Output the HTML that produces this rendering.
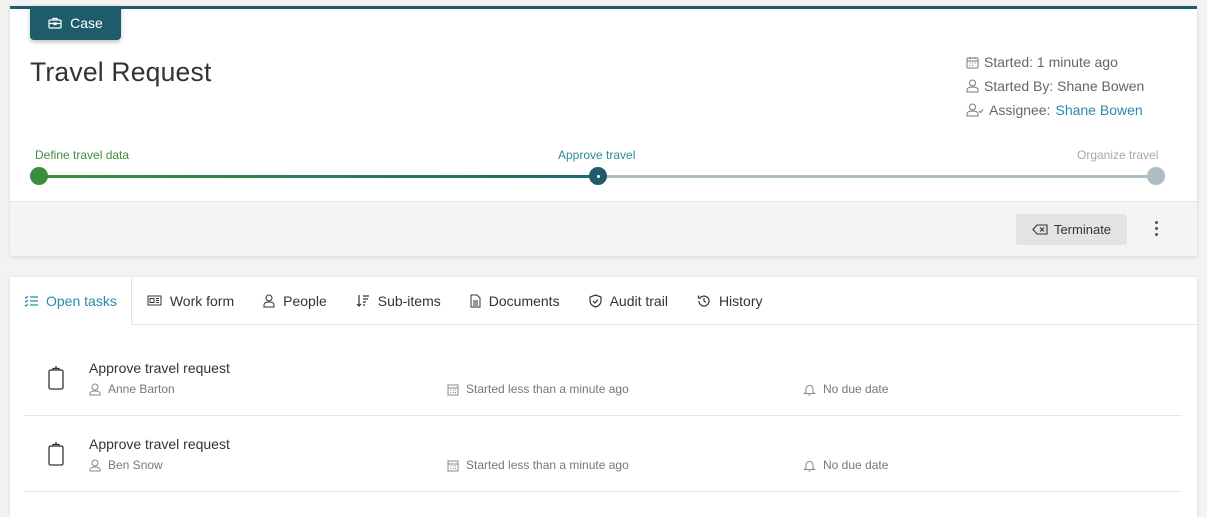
<!DOCTYPE html>
<html><head><style>
*{box-sizing:border-box;margin:0;padding:0}
body{width:1207px;height:502px;background:#f3f3f2;font-family:"Liberation Sans",sans-serif;position:relative;overflow:hidden;color:#333}
.card1{position:absolute;left:10px;top:6px;width:1187px;height:250px;background:#fff;border-top:3px solid #1e5b6b;box-shadow:0 1px 4px rgba(0,0,0,.12)}
.case{position:absolute;left:20px;top:-3px;width:91px;height:34px;background:#1e5b6b;border-radius:0 0 4px 4px;color:#fff;font-size:14px;display:flex;align-items:center;justify-content:center;gap:8px;box-shadow:0 2px 4px rgba(0,0,0,.25)}
.title{position:absolute;left:20px;top:48px;font-size:26.5px;font-weight:300;color:#333;letter-spacing:.2px}
.meta{position:absolute;left:956px;top:41px;font-size:14px;color:#666;line-height:24px}
.meta div{display:flex;align-items:center;gap:5px}
.lbl{position:absolute;font-size:12px;top:139px}
.foot{position:absolute;left:0;bottom:0;width:100%;height:55px;background:#f4f4f4;border-top:1px solid #e6e6e6}
.term{position:absolute;left:1006px;top:12px;width:111px;height:31px;background:#e3e3e3;border-radius:3px;font-size:13px;color:#333;display:flex;align-items:center;justify-content:center;gap:6px}
.card2{position:absolute;left:10px;top:277px;width:1187px;height:240px;background:#fff;box-shadow:0 1px 4px rgba(0,0,0,.1)}
.tabs{height:48px;border-bottom:1px solid #e2e2e2;display:flex;font-size:14px;color:#333}
.tab{display:flex;align-items:center;gap:8px;padding:0 14px 0 15px}
.tab.a{color:#2a8aa8;border-right:1px solid #e2e2e2;border-bottom:1px solid #fff;height:48px;padding:0 14px 0 14px}
.row{position:absolute;left:25px;width:1157px;height:76px;border-bottom:1px solid #e6e6e6;font-size:12px;color:#777}
.row .t{position:absolute;left:64px;top:20px;font-size:14px;color:#333}
.row .s{position:absolute;top:42px;display:flex;align-items:center;gap:7px}
</style></head><body>
<div class="card1">
 <div class="case"><svg width="14" height="12" viewBox="0 0 14 12" fill="none" stroke="#fff" stroke-width="1.2"><rect x="1" y="3" width="12" height="8" rx="1"/><path d="M5 3V1.5h4V3M1 6.5h12M6 6h2v1.5H6z"/></svg>Case</div>
 <div class="title">Travel Request</div>
 <div class="meta">
  <div><svg width="13" height="13" viewBox="0 0 13 13" fill="none" stroke="#777"><rect x="1" y="2" width="11" height="10" rx="1"/><path d="M1 5h11M4 1v2M9 1v2M3.5 7h1M6 7h1M8.5 7h1M3.5 9.5h1M6 9.5h1"/></svg>Started: 1 minute ago</div>
  <div><svg width="13" height="14" viewBox="0 0 13 14" fill="none" stroke="#777"><circle cx="6.5" cy="4" r="3"/><path d="M1 13v-2c0-2 2-3 5.5-3S12 9 12 11v2z"/></svg>Started By: Shane Bowen</div>
  <div><svg width="18" height="14" viewBox="0 0 18 14" fill="none" stroke="#777"><circle cx="6.5" cy="4" r="3"/><path d="M1 13v-2c0-2 2-3 5.5-3S12 9 12 11v2zM13 8l1.5 1.5L17 6.5"/></svg>Assignee: <span style="color:#2a8aa8">Shane Bowen</span></div>
 </div>
 <div class="lbl" style="left:25px;color:#3c8f3c">Define travel data</div>
 <div class="lbl" style="left:548px;color:#2a8a9a">Approve travel</div>
 <div class="lbl" style="left:1067px;color:#a0aab0">Organize travel</div>
 <div style="position:absolute;left:29px;top:166px;width:559px;height:3px;background:linear-gradient(90deg,#3a8f3c,#1e6a6e)"></div>
 <div style="position:absolute;left:588px;top:166px;width:558px;height:3px;background:#aebcc3"></div>
 <div style="position:absolute;left:20px;top:158px;width:18px;height:18px;border-radius:50%;background:#3a8f3c"></div>
 <div style="position:absolute;left:579px;top:158px;width:18px;height:18px;border-radius:50%;background:#1e5b6b"><div style="position:absolute;left:8px;top:8px;width:3px;height:3px;border-radius:50%;background:#fff"></div></div>
 <div style="position:absolute;left:1137px;top:158px;width:18px;height:18px;border-radius:50%;background:#aebcc3"></div>
 <div class="foot">
  <div class="term"><svg width="16" height="11" viewBox="0 0 16 11" fill="none" stroke="#333" stroke-width="1.1"><path d="M5 1h10v9H5L1 5.5z"/><path d="M8 3.5l4 4M12 3.5l-4 4"/></svg>Terminate</div>
  <div style="position:absolute;left:1145px;top:19px;width:3px;font-size:0">
   <div style="width:3px;height:3px;border-radius:50%;background:#555;margin-bottom:3px"></div><div style="width:3px;height:3px;border-radius:50%;background:#555;margin-bottom:3px"></div><div style="width:3px;height:3px;border-radius:50%;background:#555"></div></div>
 </div>
</div>
<div class="card2">
 <div class="tabs">
  <div class="tab a"><svg width="14" height="12" viewBox="0 0 14 12" fill="none" stroke="#2a8aa8" stroke-width="1.2"><path d="M1 2l1 1 2-2M1 6l1 1 2-2M1 10l1 1 2-2M6 2h8M6 6h8M6 10h8"/></svg>Open tasks</div>
  <div class="tab"><svg width="15" height="11" viewBox="0 0 15 11" fill="none" stroke="#333"><rect x="1" y="1" width="13" height="9"/><path d="M3 3.5h4v4H3zM9 3.5h3M9 5.5h3M9 7.5h3"/></svg>Work form</div>
  <div class="tab"><svg width="12" height="14" viewBox="0 0 12 14" fill="none" stroke="#333"><circle cx="6" cy="4" r="3"/><path d="M1 13v-2c0-2 2-3 5-3s5 1 5 3v2z"/></svg>People</div>
  <div class="tab"><svg width="14" height="13" viewBox="0 0 14 13" fill="none" stroke="#333" stroke-width="1.2"><path d="M3 1v11M1 10l2 2 2-2M7 2h6M7 5h5M7 8h3M7 11h2"/></svg>Sub-items</div>
  <div class="tab"><svg width="11" height="14" viewBox="0 0 11 14" fill="none" stroke="#333"><path d="M1 1h6l3 3v9H1z"/><path d="M3 7h5M3 9h5M3 11h5"/></svg>Documents</div>
  <div class="tab"><svg width="13" height="14" viewBox="0 0 13 14" fill="none" stroke="#333" stroke-width="1.2"><path d="M6.5 1L12 3v4c0 3-2.5 5-5.5 6C3.5 12 1 10 1 7V3z"/><path d="M4 7l2 2 3-3.5"/></svg>Audit trail</div>
  <div class="tab"><svg width="14" height="14" viewBox="0 0 14 14" fill="none" stroke="#333" stroke-width="1.2"><path d="M2 7a5 5 0 1 0 1.5-3.5M1.5 1.5v2.5H4M7 4v3l2 1.5"/></svg>History</div>
 </div>
</div>
<div class="row" style="top:340px"><svg style="position:absolute;left:23px;top:26px" width="16" height="24" viewBox="0 0 16 24" fill="none" stroke="#333" stroke-width="1.3"><rect x="1" y="4" width="14" height="19" rx="1.5"/><path d="M5 4V2.5h6V4M7 1h2"/></svg><div class="t">Approve travel request</div>
 <div class="s" style="left:64px"><svg width="12" height="13" viewBox="0 0 12 13" fill="none" stroke="#888"><circle cx="6" cy="4" r="3"/><path d="M1 12v-1.5C1 9 3 8 6 8s5 1 5 2.5V12z"/></svg>Anne Barton</div>
 <div class="s" style="left:422px"><svg width="12" height="13" viewBox="0 0 12 13" fill="none" stroke="#888"><rect x="1" y="2" width="10" height="10"/><path d="M1 5h10M3.5 7h1M6 7h1M8 7h1M3.5 9.5h1M6 9.5h1M8 9.5h1"/></svg>Started less than a minute ago</div>
 <div class="s" style="left:778px"><svg width="13" height="13" viewBox="0 0 13 13" fill="none" stroke="#888"><path d="M3 9V6a3.5 3.5 0 0 1 7 0v3l1.5 1.5h-10zM5.5 12h2"/></svg>No due date</div></div>
<div class="row" style="top:416px"><svg style="position:absolute;left:23px;top:26px" width="16" height="24" viewBox="0 0 16 24" fill="none" stroke="#333" stroke-width="1.3"><rect x="1" y="4" width="14" height="19" rx="1.5"/><path d="M5 4V2.5h6V4M7 1h2"/></svg><div class="t">Approve travel request</div>
 <div class="s" style="left:64px"><svg width="12" height="13" viewBox="0 0 12 13" fill="none" stroke="#888"><circle cx="6" cy="4" r="3"/><path d="M1 12v-1.5C1 9 3 8 6 8s5 1 5 2.5V12z"/></svg>Ben Snow</div>
 <div class="s" style="left:422px"><svg width="12" height="13" viewBox="0 0 12 13" fill="none" stroke="#888"><rect x="1" y="2" width="10" height="10"/><path d="M1 5h10M3.5 7h1M6 7h1M8 7h1M3.5 9.5h1M6 9.5h1M8 9.5h1"/></svg>Started less than a minute ago</div>
 <div class="s" style="left:778px"><svg width="13" height="13" viewBox="0 0 13 13" fill="none" stroke="#888"><path d="M3 9V6a3.5 3.5 0 0 1 7 0v3l1.5 1.5h-10zM5.5 12h2"/></svg>No due date</div></div>
</body></html>
